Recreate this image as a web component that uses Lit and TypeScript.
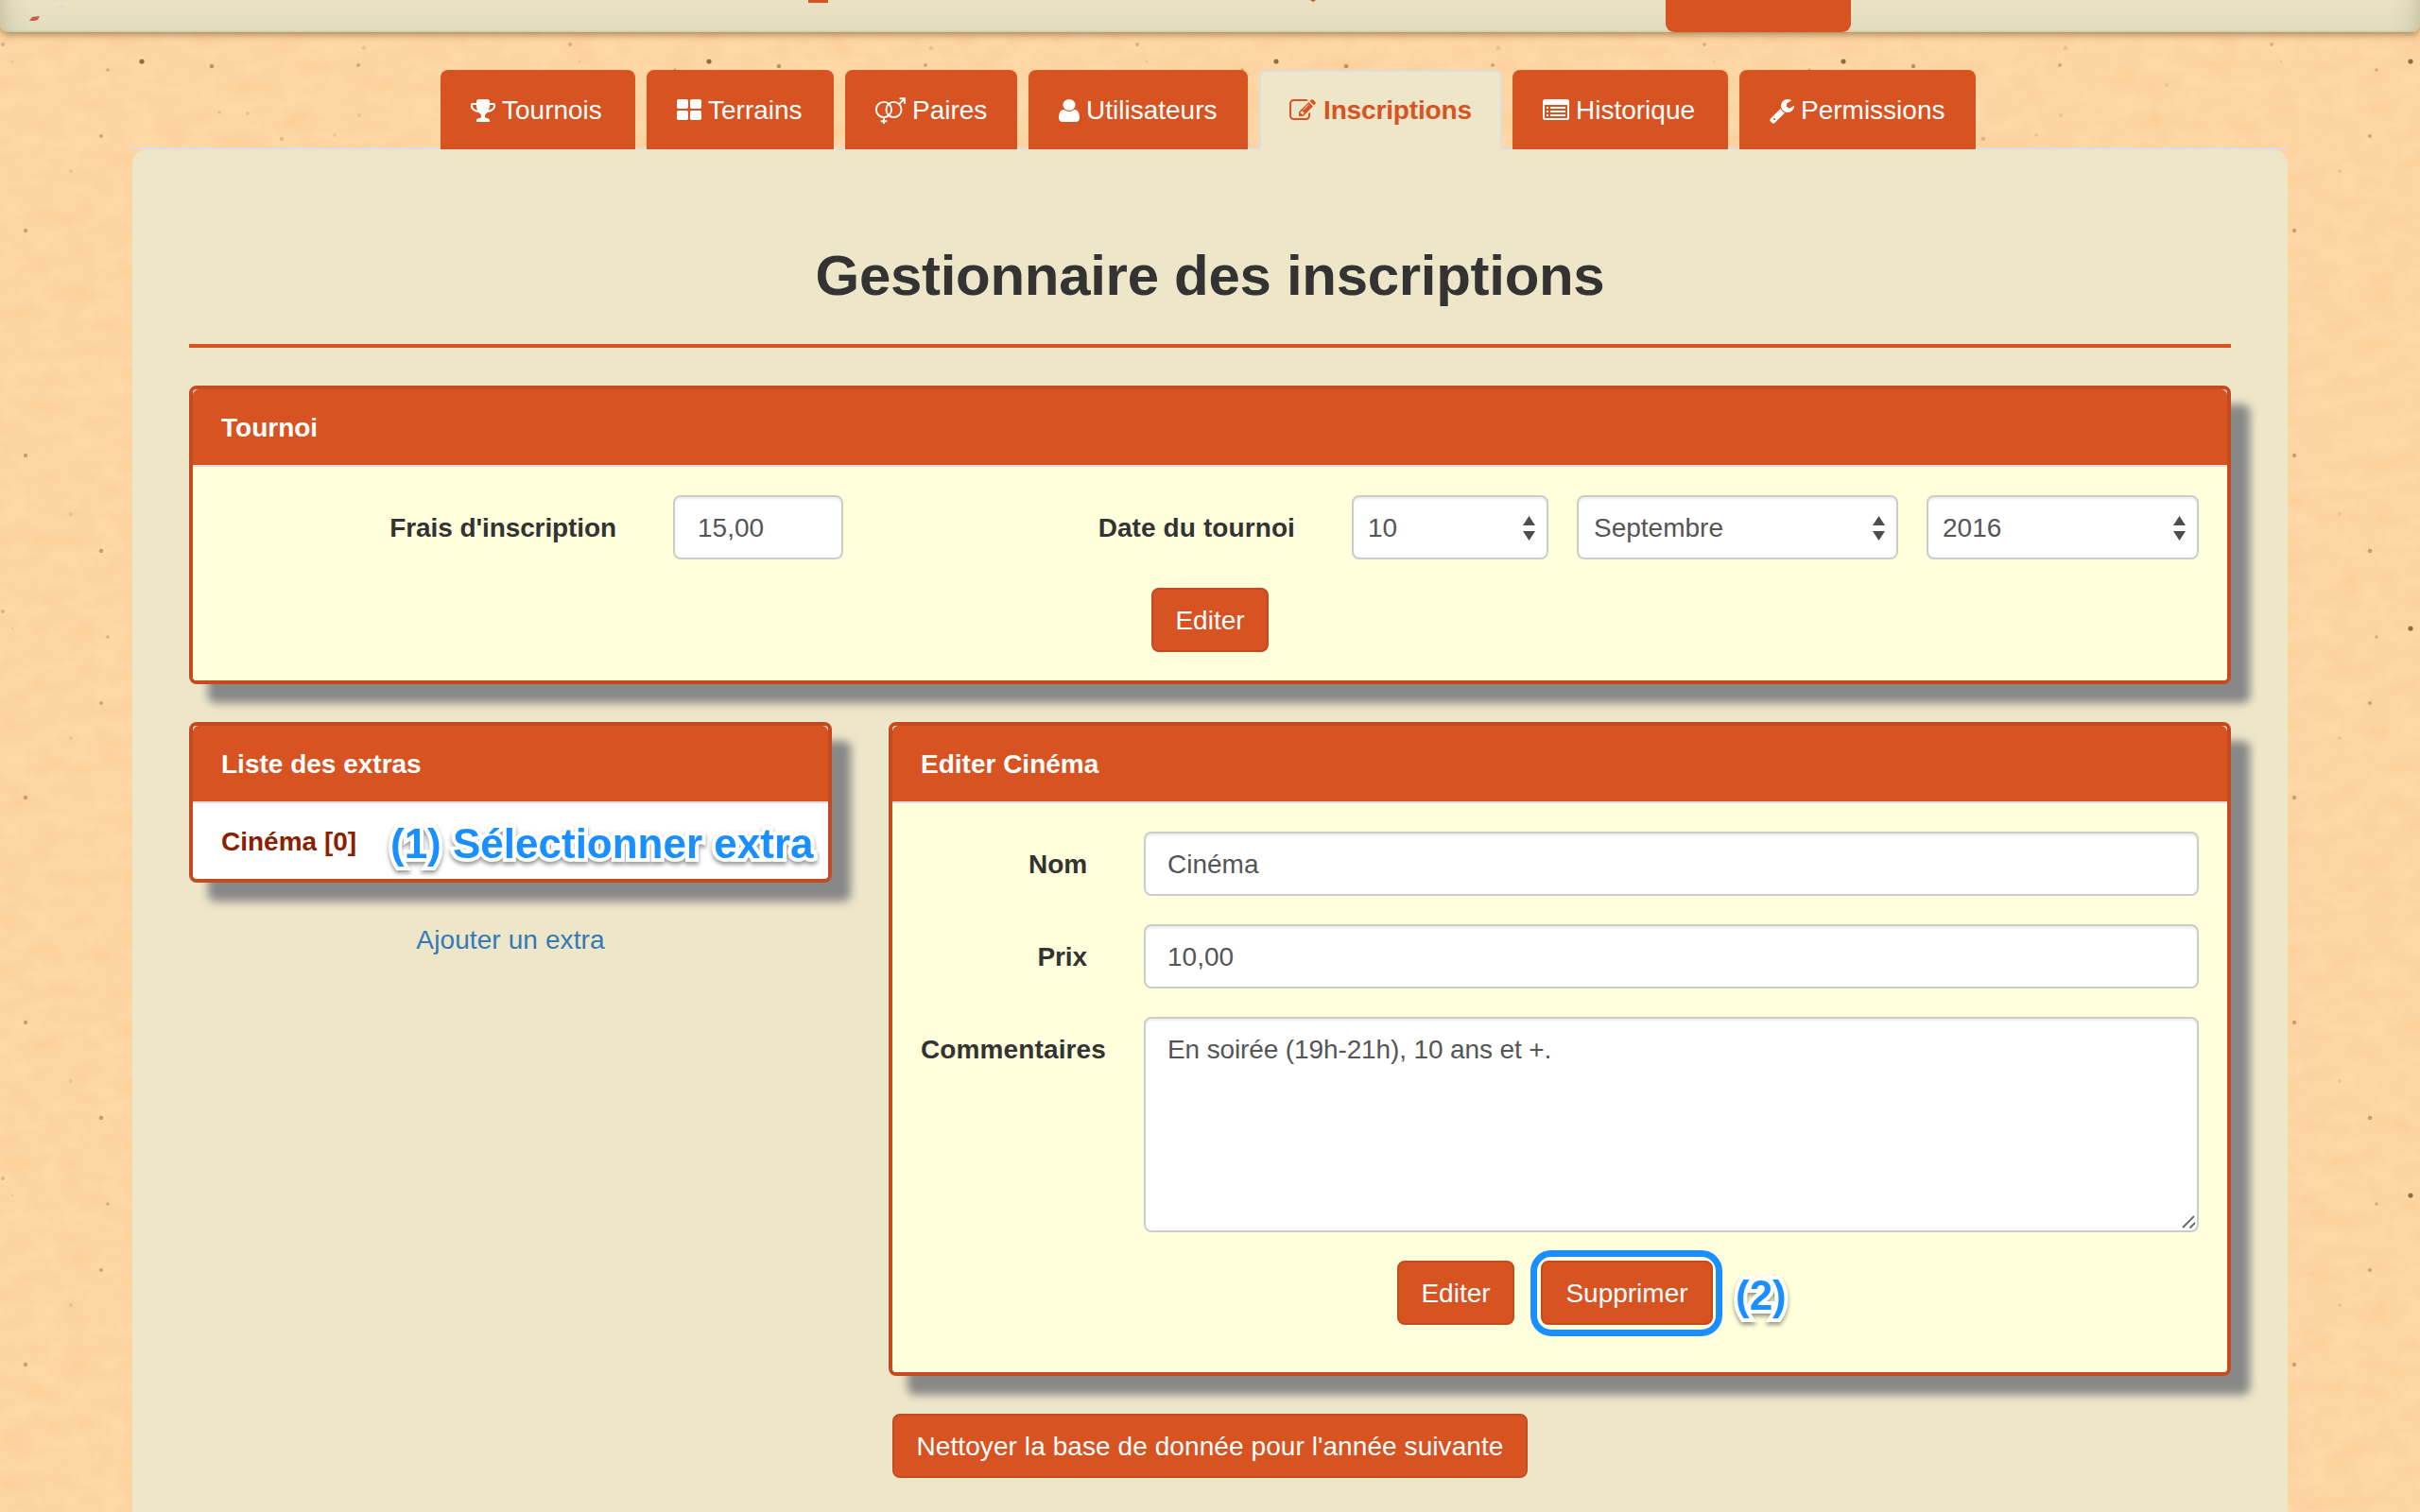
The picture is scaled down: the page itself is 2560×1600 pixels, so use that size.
import { LitElement, html, css, svg } from "lit";
import { customElement, property } from "lit/decorators.js";

const trophy = svg`<path d="M522 883q-74-162-74-371h-256v96q0 78 94.5 162t235.5 113zm1078-275v-96h-256q0 209-74 371 141-29 235.5-113t94.5-162zm128-128v128q0 71-41.5 143t-112 130-173 97.5-215.5 44.5q-42 54-95 95-38 34-52.5 72.5t-14.5 89.5q0 54 30.5 91t97.5 37q75 0 133.5 45.5t58.5 114.5v64q0 14-9 23t-23 9h-832q-14 0-23-9t-9-23v-64q0-69 58.5-114.5t133.5-45.5q67 0 97.5-37t30.5-91q0-51-14.5-89.5t-52.5-72.5q-53-41-95-95-113-5-215.5-44.5t-173-97.5-112-130-41.5-143v-128q0-40 28-68t68-28h288v-96q0-66 47-113t113-47h576q66 0 113 47t47 113v96h288q40 0 68 28t28 68z"/>`;
const thLarge = svg`<path d="M832 1024v384q0 52-38 90t-90 38h-512q-52 0-90-38t-38-90v-384q0-52 38-90t90-38h512q52 0 90 38t38 90zm0-768v384q0 52-38 90t-90 38h-512q-52 0-90-38t-38-90v-384q0-52 38-90t90-38h512q52 0 90 38t38 90zm896 768v384q0 52-38 90t-90 38h-512q-52 0-90-38t-38-90v-384q0-52 38-90t90-38h512q52 0 90 38t38 90zm0-768v384q0 52-38 90t-90 38h-512q-52 0-90-38t-38-90v-384q0-52 38-90t90-38h512q52 0 90 38t38 90z"/>`;
const venusMars = svg`<g fill="none" stroke="currentColor" stroke-width="1.9"><circle cx="9" cy="13" r="8.1"/><circle cx="19.5" cy="13" r="8.1"/><path d="M9 21v7.500M5.800 25.200h6.400M25.200 7.200l5.600-5.600M25.600 1.300h5.400v5.400"/></g>`;
const user = svg`<path d="M1536 1399q0 109-62.5 187t-150.5 78h-854q-88 0-150.5-78t-62.5-187q0-85 8.5-160.5t31.5-152 58.5-131 94-89 134.5-34.5q131 128 313 128t313-128q76 0 134.5 34.5t94 89 58.5 131 31.5 152 8.5 160.5zm-256-887q0 159-112.5 271.5t-271.5 112.5-271.5-112.5-112.5-271.5 112.5-271.5 271.5-112.5 271.5 112.5 112.5 271.5z"/>`;
const edit = svg`<path d="M888 1184l116-116-152-152-116 116v56h96v96h56zm440-720q-16-16-33 1l-350 350q-17 17-1 33t33-1l350-350q17-17 1-33zm80 594v190q0 119-84.5 203.5t-203.5 84.5h-832q-119 0-203.5-84.5t-84.5-203.5v-832q0-119 84.5-203.5t203.5-84.5h832q63 0 117 25 15 7 18 23 3 17-9 29l-49 49q-14 14-32 8-23-6-45-6h-832q-66 0-113 47t-47 113v832q0 66 47 113t113 47h832q66 0 113-47t47-113v-126q0-13 9-22l64-64q15-15 35-7t20 29zm-96-738l288 288-672 672h-288v-288zm444 132l-92 92-288-288 92-92q28-28 68-28t68 28l152 152q28 28 28 68t-28 68z"/>`;
const listAlt = svg`<path fill-rule="evenodd" d="M2.5 2h23a2.5 2.5 0 0 1 2.5 2.5v17a2.5 2.5 0 0 1-2.5 2.5h-23A2.5 2.5 0 0 1 0 21.5v-17A2.5 2.5 0 0 1 2.500 2zM2 8v13.500q0 .5.5.5h23q.5 0 .5-.5V8z"/><path d="M4 10h2v2H4zM8 10h16v2H8zM4 14h2v2H4zM8 14h16v2H8zM4 18h2v2H4zM8 18h16v2H8z"/>`;
const wrench = svg`<path d="M448 1472q0-26-19-45t-45-19-45 19-19 45 19 45 45 19 45-19 19-45zm644-420l-682 682q-37 37-90 37-52 0-91-37l-106-108q-38-36-38-90 0-53 38-91l681-681q39 98 114.5 173.5t173.5 114.500zm634-435q0 39-23 106-47 134-164.5 217.5t-258.5 83.5q-185 0-316.5-131.5t-131.5-316.5 131.5-316.5 316.5-131.5q58 0 121.500 16.5t107.5 46.5q16 11 16 28t-16 28l-293 169v224l193 107q5-3 79-48.5t135.5-81 70.5-35.5q15 0 23.5 10t8.5 25z"/>`;

const tabs = [
  { label: "Tournois", icon: trophy, box: "64 0 1664 1792", iw: 26, w: 206 },
  { label: "Terrains", icon: thLarge, box: "64 0 1664 1792", iw: 26, w: 198 },
  { label: "Paires", icon: venusMars, box: "0 0 32 28", iw: 32, w: 182 },
  { label: "Utilisateurs", icon: user, box: "256 0 1280 1792", iw: 22, w: 232 },
  { label: "Inscriptions", icon: edit, box: "0 0 1792 1792", iw: 28, w: 257, active: true },
  { label: "Historique", icon: listAlt, box: "0 0 28 28", iw: 28, w: 228 },
  { label: "Permissions", icon: wrench, box: "64 0 1664 1792", iw: 26, w: 250 },
];

// x, y, radius, opacity of the paper grain specks inside one 600px tile
const specks = [
  [150, 65, 2.6, 0.7], [224, 70, 2.3, 0.45], [114, 74, 1.7, 0.3], [379, 69, 2, 0.3],
  [385, 51, 2.4, 0.13], [3, 47, 2.1, 0.25], [232, 119, 1.8, 0.16], [262, 120, 1.8, 0.16],
  [107, 144, 2, 0.35], [298, 147, 2.3, 0.2], [354, 143, 1.8, 0.14], [380, 122, 2.2, 0.1],
  [27, 244, 2.2, 0.35], [27, 482, 2.2, 0.35], [107, 583, 2.3, 0.38], [13, 65, 1.5, 0.1],
  [75, 544, 2, 0.12], [75, 181, 2, 0.12], [492, 90, 2, 0.1], [556, 30, 1.8, 0.1],
];

@customElement("paper-background")
class PaperBackground extends LitElement {
  static styles = css`
    :host { position: absolute; inset: 0; z-index: -1; }
    svg { display: block; }
  `;
  render() {
    return html`<svg width="2560" height="1600">
      <defs>
        <filter id="soft" x="-100%" y="-100%" width="300%" height="300%"><feGaussianBlur stdDeviation="0.7" /></filter>
        <filter id="grain" x="0" y="0" width="100%" height="100%" color-interpolation-filters="sRGB">
          <feTurbulence type="fractalNoise" baseFrequency="0.03 0.05" numOctaves="4" seed="8" />
          <feColorMatrix values="0 0 0 0 0.93  0 0 0 0 0.68  0 0 0 0 0.42  1.2 0 0 0 -0.36" />
        </filter>
        <pattern id="specks" width="600" height="600" patternUnits="userSpaceOnUse">
          ${specks.map(([x, y, r, o]) => svg`<ellipse cx=${x} cy=${y} rx=${r} ry=${r} fill="#6b3a12" opacity=${o} filter="url(#soft)"/>`)}
        </pattern>
      </defs>
      <rect width="2560" height="1600" fill="#ffd8a6" />
      <rect width="2560" height="1600" filter="url(#grain)" opacity="0.28" />
      <rect width="2560" height="1600" fill="url(#specks)" />
    </svg>`;
  }
}

@customElement("ui-panel")
class UiPanel extends LitElement {
  @property() heading = "";
  static styles = css`
    :host {
      display: block;
      box-sizing: border-box;
      border: 4px solid #c24b20;
      border-radius: 8px;
      background: #fff;
      box-shadow: 20px 20px 10px #888;
    }
    .head {
      height: 40px;
      padding: 21px 30px 19px;
      border-bottom: 2px solid #ddd;
      border-radius: 6px 6px 0 0;
      background: #d75322;
      color: #fff;
      font-weight: bold;
    }
  `;
  render() {
    return html`<div class="head">${this.heading}</div><slot></slot>`;
  }
}

@customElement("app-root")
class AppRoot extends LitElement {
  static styles = css`
    :host {
      display: block;
      position: relative;
      z-index: 0;
      width: 2560px;
      height: 1600px;
      overflow: hidden;
      font: 28px/40px "Liberation Sans", Arial, sans-serif;
      color: #333;
    }
    .topbar {
      position: relative;
      height: 34px;
      box-sizing: border-box;
      border-radius: 0 0 8px 8px;
      background: linear-gradient(#e9e2c3, #e2dcc0);
      box-shadow: 0 2px 8px rgba(90, 60, 20, 0.6), inset 0 -2px 1px rgba(190, 190, 150, 0.3),
        inset 30px 0 30px -32px rgba(90, 90, 50, 0.35), inset -30px 0 30px -32px rgba(90, 90, 50, 0.35);
      display: flex;
      padding-left: 1762px;
    }
    .topbtn { width: 196px; height: 34px; background: #d75322; border-radius: 0 0 9px 9px; }
    .edge { position: absolute; left: 0; top: 0; }
    .tabs {
      display: flex;
      gap: 12px;
      box-sizing: border-box;
      width: 2280px;
      height: 84px;
      margin: 40px 140px 0;
      padding-left: 326px;
      border-bottom: 2px solid #ddd;
    }
    .tab {
      box-sizing: border-box;
      height: 84px;
      flex: none;
      display: flex;
      align-items: center;
      gap: 7px;
      padding: 0 0 0 30px;
      border: 2px solid #d75322;
      border-bottom: 0;
      border-radius: 8px 8px 0 0;
      background: #d75322;
      color: #fff;
      white-space: nowrap;
    }
    .tab svg { flex: none; fill: currentColor; margin-top: -1px; }
    .tab.active {
      margin-right: -1px;
      gap: 8px;
      background: #eee6c9;
      border-color: #ddd;
      color: #d75322;
      font-weight: bold;
      letter-spacing: -0.15px;
    }
    .page {
      box-sizing: border-box;
      width: 2280px;
      height: 1442px;
      margin: 0 140px;
      padding: 101px 60px 0;
      border-radius: 16px 16px 0 0;
      background: #eee6c9;
    }
    h1 {
      margin: 0 0 40px;
      padding-bottom: 39px;
      border-bottom: 4px solid #d75322;
      font-size: 60px;
      line-height: 66px;
      letter-spacing: -0.3px;
      text-align: center;
    }
    .body { padding: 30px; background: #ffffdb; border-radius: 0 0 4px 4px; }
    .row { display: flex; }
    .label { padding-top: 15px; height: 40px; font-weight: bold; text-align: right; white-space: nowrap; letter-spacing: -0.1px; }
    .wide { letter-spacing: 0.12px; }
    .fee { width: 418px; }
    .date { width: 478px; letter-spacing: 0.1px; }
    .field {
      box-sizing: border-box;
      height: 68px;
      padding: 13px 24px 11px 23px;
      border: 2px solid #ccc;
      border-radius: 8px;
      background: #fff;
      box-shadow: inset 0 2px 2px rgba(0, 0, 0, 0.075);
      color: #555;
      white-space: nowrap;
    }
    .amount { width: 180px; margin-left: 60px; padding-left: 24px; }
    .select { display: flex; justify-content: space-between; align-items: center; margin-left: 30px; padding: 13px 12px 11px 15px; }
    .select svg { fill: #4d4d4d; margin-top: -1px; }
    .day { width: 208px; margin-left: 60px; }
    .month { width: 340px; padding-left: 16px; }
    .year { width: 288px; }
    .btn {
      display: flex;
      justify-content: center;
      box-sizing: border-box;
      width: 124px;
      height: 68px;
      padding: 13px 0 11px;
      border: 2px solid #c24b20;
      border-radius: 8px;
      background: #d75322;
      color: #fff;
      white-space: nowrap;
    }
    .center { margin: 30px auto 0; }
    .cols { display: flex; align-items: flex-start; justify-content: space-between; margin-top: 40px; }
    .left { width: 680px; }
    .right { width: 1420px; }
    .item { position: relative; padding: 21px 30px 19px; color: #8b2000; font-weight: bold; white-space: nowrap; }
    .link { margin-top: 41px; text-align: center; color: #337ab7; letter-spacing: 0.1px; }
    .form { display: flex; flex-direction: column; gap: 30px; padding-bottom: 50px; }
    .form .label { width: 176px; margin-right: 60px; }
    .form .field { flex: 1; }
    .form .comments { position: relative; height: 228px; letter-spacing: -0.12px; }
    .comments svg { position: absolute; right: 1px; bottom: 1px; }
    .actions { padding-left: 504px; gap: 28px; }
    .target { position: relative; width: 182px; }
    .ring {
      position: absolute;
      left: -13px;
      top: -13px;
      width: 189px;
      height: 77px;
      border: 7px solid #1a8fff;
      border-radius: 22px;
      box-shadow: 0 0 0 1px rgba(255, 255, 255, 0.7), inset 0 0 0 1px rgba(255, 255, 255, 0.7);
    }
    .note {
      position: absolute;
      font-size: 44px;
      line-height: 50px;
      font-weight: bold;
      color: #1a8fff;
      -webkit-text-stroke: 8px #fff;
      stroke-linejoin: round;
      paint-order: stroke fill;
      filter: drop-shadow(0 3px 2px rgba(0, 0, 0, 0.4));
      white-space: nowrap;
    }
    .one { left: 209px; top: 18px; }
    .two { left: 204px; top: 10px; }
    .clean { width: 672px; margin: 40px 0 0 4px; letter-spacing: 0.08px; }
  `;

  select(cls: string, value: string) {
    return html`<div class="field select ${cls}"><span>${value}</span>
      <svg width="13" height="26" viewBox="0 0 13 26"><path d="M6.500 0L13 10H0zM0 16h13L6.500 26z" /></svg></div>`;
  }

  render() {
    return html`
      <paper-background></paper-background>
      <div class="topbar">
        <div class="topbtn"></div>
        <svg class="edge" width="1500" height="34">
          <path d="M31 22l3-4 8-1-2 4-4 1z" fill="#cf5a43" />
          <path d="M62 6h6v3h-6z" fill="#ecd3cf" />
          <path d="M855 0h21v3h-21zM1386 0h6l-3 2z" fill="#d75322" />
        </svg>
      </div>
      <div class="tabs">
        ${tabs.map((t) => html`<div class="tab ${t.active ? "active" : ""}" style="width:${t.w}px">
          <svg width=${t.iw} height="28" viewBox=${t.box} preserveAspectRatio="none">${t.icon}</svg><span>${t.label}</span></div>`)}
      </div>
      <div class="page">
        <h1>Gestionnaire des inscriptions</h1>
        <ui-panel heading="Tournoi">
          <div class="body">
            <div class="row">
              <div class="label fee">Frais d'inscription</div>
              <div class="field amount">15,00</div>
              <div class="label date">Date du tournoi</div>
              ${this.select("day", "10")} ${this.select("month", "Septembre")} ${this.select("year", "2016")}
            </div>
            <div class="btn center">Editer</div>
          </div>
        </ui-panel>
        <div class="cols">
          <div class="left">
            <ui-panel heading="Liste des extras">
              <div class="item">Cinéma [0]<div class="note one">(1) Sélectionner extra</div></div>
            </ui-panel>
            <div class="link">Ajouter un extra</div>
          </div>
          <div class="right">
            <ui-panel heading="Editer Cinéma">
              <div class="body form">
                <div class="row"><div class="label">Nom</div><div class="field">Cinéma</div></div>
                <div class="row"><div class="label">Prix</div><div class="field">10,00</div></div>
                <div class="row">
                  <div class="label wide">Commentaires</div>
                  <div class="field comments">En soirée (19h-21h), 10 ans et +.
                    <svg width="16" height="16"><path d="M2 14L14 2M9.500 14.500L15 9" stroke="#666" stroke-width="1.8" /></svg>
                  </div>
                </div>
                <div class="row actions">
                  <div class="btn">Editer</div>
                  <div class="btn target">Supprimer<div class="ring"></div><div class="note two">(2)</div></div>
                </div>
              </div>
            </ui-panel>
            <div class="btn clean">Nettoyer la base de donnée pour l'année suivante</div>
          </div>
        </div>
      </div>
    `;
  }
}
